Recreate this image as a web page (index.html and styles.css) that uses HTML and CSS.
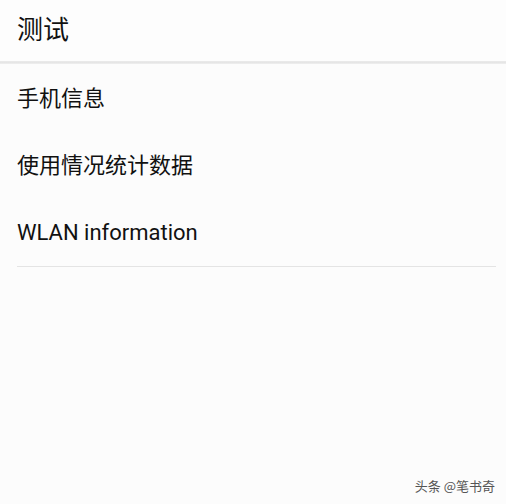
FILE: index.html
```html
<!DOCTYPE html>
<html>
<head>
<meta charset="utf-8">
<link rel="stylesheet" href="styles.css">
</head>
<body>
<div class="page">
  <header class="bar">测试</header>
  <div class="shadow"></div>
  <ul class="list">
    <li class="item">手机信息</li>
    <li class="item">使用情况统计数据</li>
    <li class="item last">WLAN information</li>
  </ul>
  <div class="watermark">头条 @笔书奇</div>
</div>
</body>
</html>
```
FILE: styles.css
```css
html, body {
  margin: 0;
  padding: 0;
  background: #fcfcfc;
}
.page {
  position: relative;
  width: 506px;
  height: 504px;
  font-family: Roboto, "Noto Sans CJK SC", sans-serif;
  color: #111;
  overflow: hidden;
}
.bar {
  height: 61px;
  line-height: 61px;
  padding-left: 17px;
  font-size: 26px;
  background: #fdfdfd;
}
.shadow {
  height: 3px;
  background: linear-gradient(#ebebeb, #e4e4e4 60%, #f2f2f2);
}
.list {
  list-style: none;
  margin: 1px 0 0 0;
  padding: 0 10px 0 17px;
}
.item {
  height: 67px;
  line-height: 67px;
  font-size: 22px;
}
.item.last {
  border-bottom: 1px solid #e4e4e4;
}
.watermark {
  position: absolute;
  right: 11px;
  bottom: 9px;
  font-size: 13px;
  color: #555;
  font-family: "Noto Sans CJK SC", sans-serif;
}
```
